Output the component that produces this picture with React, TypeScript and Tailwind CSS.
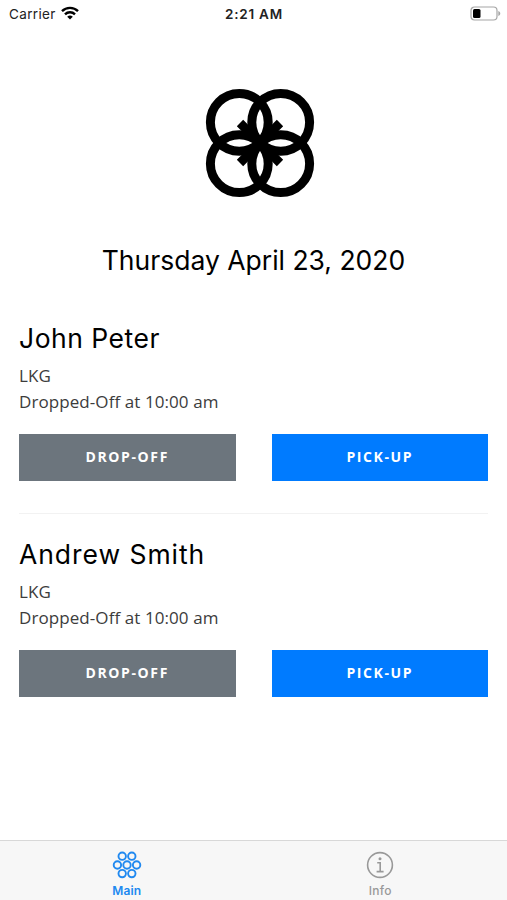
interface Student {
  name: string;
  grade: string;
  status: string;
  nameSpacing: string;
}

const students: Student[] = [
  { name: 'John Peter', grade: 'LKG', status: 'Dropped-Off at 10:00 am', nameSpacing: 'tracking-[0.5px]' },
  { name: 'Andrew Smith', grade: 'LKG', status: 'Dropped-Off at 10:00 am', nameSpacing: 'tracking-[0.95px]' },
];

function StatusBar() {
  return (
    <div className="grid h-7 grid-cols-3 items-center pl-[9px] pr-[6px] font-['Inter',sans-serif] text-[13.5px] text-[#222]">
      <div className="flex items-center gap-[5px]">
        <span className="tracking-[0.35px]">Carrier</span>
        <svg width="18" height="14" viewBox="0 0 18 14" fill="none" stroke="#000" strokeWidth="2.4" className="-mt-[2px]">
          <path d="M1 5.2a11.3 11.3 0 0 1 16 0" />
          <path d="M4 8.3a7.1 7.1 0 0 1 10 0" />
          <path d="M9 13.6 6.2 10.8a4 4 0 0 1 5.6 0Z" fill="#000" stroke="none" />
        </svg>
      </div>
      <span className="pr-[2px] text-center font-semibold tracking-[0.75px]">2:21 AM</span>
      <svg className="-mt-[2px] justify-self-end" width="31" height="15" viewBox="0 0 31 15">
        <rect x="1" y="1" width="26" height="13" rx="3.5" fill="none" stroke="#a6a6a6" strokeWidth="1.2" />
        <rect x="3" y="3" width="7.5" height="9" rx="1.5" fill="#000" />
        <path d="M28.3 5v5c2.6-.8 2.6-4.2 0-5Z" fill="#a6a6a6" />
      </svg>
    </div>
  );
}

function Logo() {
  return (
    <svg width="110" height="110" viewBox="0 0 110 110" fill="none" stroke="#000" strokeWidth="9">
      <circle cx="34.3" cy="34.3" r="28.9" />
      <circle cx="75.7" cy="34.3" r="28.9" />
      <circle cx="34.3" cy="75.7" r="28.9" />
      <circle cx="75.7" cy="75.7" r="28.9" />
      <path d="M35 35 75 75M75 35 35 75" />
    </svg>
  );
}

function StudentCard({ student }: { student: Student }) {
  return (
    <section className="h-[216px]">
      <h2
        className={`mb-[3px] font-['Inter',sans-serif] text-[26.5px] leading-[44px] text-black ${student.nameSpacing}`}
      >
        {student.name}
      </h2>
      <p className="text-[17px] leading-[26px] tracking-[0.08px] text-[#3c3c3c]">{student.grade}</p>
      <p className="text-[17px] leading-[26px] tracking-[0.08px] text-[#3c3c3c]">{student.status}</p>
      <div className="mt-[19px] grid grid-cols-2 gap-[36px] text-[14px] font-bold tracking-[1.6px] text-white">
        <button className="h-[47px] bg-[#6c757d] pb-[2px]">DROP-OFF</button>
        <button className="h-[47px] bg-[#007bff] pb-[2px]">PICK-UP</button>
      </div>
    </section>
  );
}

function TabBar() {
  return (
    <nav className="grid h-[60px] grid-cols-2 border-t border-[#d8d8d8] bg-[#f7f7f7] pt-[10px] font-['Inter',sans-serif] text-[12px] leading-[16px]">
      <div className="flex flex-col items-center gap-[4px] font-semibold text-[#2089f0]">
        <svg width="30" height="28" viewBox="0 0 30 28" fill="none" stroke="currentColor" strokeWidth="1.9">
          <circle cx="10.2" cy="5.2" r="3.7" />
          <circle cx="19.8" cy="5.2" r="3.7" />
          <circle cx="5.4" cy="14" r="3.7" />
          <circle cx="15" cy="14" r="3.7" />
          <circle cx="24.6" cy="14" r="3.7" />
          <circle cx="10.2" cy="22.6" r="3.7" />
          <circle cx="19.8" cy="22.6" r="3.7" />
        </svg>
        <span className="tracking-[0.1px]">Main</span>
      </div>
      <div className="flex flex-col items-center gap-[4px] font-medium text-[#999]">
        <svg width="28" height="28" viewBox="0 0 28 28" fill="none" stroke="currentColor" strokeWidth="1.6">
          <circle cx="14" cy="14" r="12.4" />
          <circle cx="14" cy="7.7" r="1.5" fill="currentColor" stroke="none" />
          <path d="M11.2 11.8h3v8.6M10.6 20.6h7" />
        </svg>
        <span className="tracking-[0.3px]">Info</span>
      </div>
    </nav>
  );
}

export default function App() {
  return (
    <div className="flex h-[900px] w-full flex-col bg-white font-['Open_Sans',sans-serif]">
      <StatusBar />
      <main className="flex-1 px-[19px] pt-[60px]">
        <div className="flex justify-center pl-3">
          <Logo />
        </div>
        <h1 className="mt-[42px] text-center font-['Inter',sans-serif] text-[26.5px] leading-[40px] text-black">
          Thursday April 23, 2020
        </h1>
        <div className="mt-[36px]">
          <StudentCard student={students[0]} />
          <hr className="-mt-[19px] mb-[18px] border-[#f2f2f2]" />
          <StudentCard student={students[1]} />
        </div>
      </main>
      <TabBar />
    </div>
  );
}
